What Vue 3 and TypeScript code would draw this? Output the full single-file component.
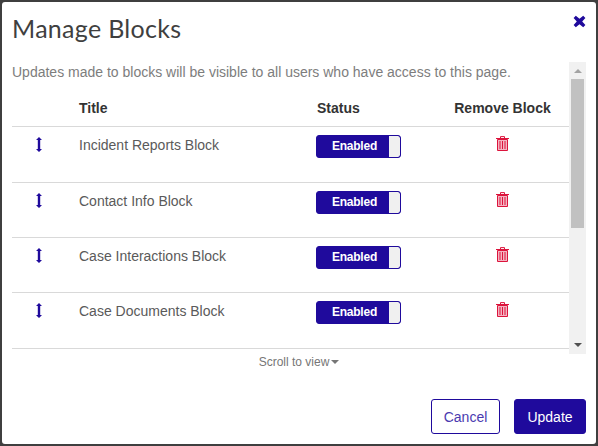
<script setup lang="ts">
const blocks: string[] = [
  'Incident Reports Block',
  'Contact Info Block',
  'Case Interactions Block',
  'Case Documents Block',
]
</script>

<template>
  <div class="frame">
    <div class="modal">
      <header class="head">
        <h1 class="title">Manage Blocks</h1>
        <button class="close" aria-label="Close">
          <svg width="13" height="13" viewBox="0 0 13 13">
            <path d="M2.8 .8 6.5 3.8 10.2 .8 12.4 3 9.2 6.5 12.4 10 10.2 12.2 6.5 9.2 2.8 12.2 .6 10 3.8 6.5 .6 3Z" fill="#1f0a9c" />
          </svg>
        </button>
      </header>
      <div class="scrollarea">
        <div class="content">
          <p class="intro">Updates made to blocks will be visible to all users who have access to this page.</p>
          <div class="row header">
            <div class="c-move"></div>
            <div class="c-title">Title</div>
            <div class="c-status">Status</div>
            <div class="c-remove">Remove Block</div>
          </div>
          <div v-for="b in blocks" :key="b" class="row item">
            <div class="c-move">
              <svg width="8" height="15" viewBox="0 0 8 15">
                <path d="M4 0 7 3H5.2V12H7L4 15 1 12H2.8V3H1Z" fill="#1f0a9c" />
              </svg>
            </div>
            <div class="c-title name">{{ b }}</div>
            <div class="c-status">
              <div class="toggle">
                <span class="on">Enabled</span>
                <span class="knob"></span>
              </div>
            </div>
            <div class="c-remove">
              <svg width="13" height="15" viewBox="0 0 13 15">
                <path d="M4.5 2V.6H8.5V2" fill="none" stroke="#dc143c" stroke-width="1" />
                <path d="M0 2H13V3H0Z" fill="#dc143c" />
                <path d="M1.5 3.5H11.5V14.5H1.5Z" fill="#f4b4c2" stroke="#dc143c" stroke-width="1" />
                <path d="M4 5V13M6.5 5V13M9 5V13" stroke="#dc143c" stroke-width="1" />
              </svg>
            </div>
          </div>
        </div>
        <div class="bar">
          <div class="arrow up"></div>
          <div class="thumb"></div>
          <div class="arrow down"></div>
        </div>
      </div>
      <div class="hint">Scroll to view<span class="caret"></span></div>
      <footer class="foot">
        <button class="btn cancel">Cancel</button>
        <button class="btn update">Update</button>
      </footer>
    </div>
  </div>
</template>

<style>
html, body { margin: 0; padding: 0; }
</style>

<style scoped>
.frame {
  width: 598px;
  height: 446px;
  box-sizing: border-box;
  padding: 2px;
  background: #3f3f3f;
  font-family: "Liberation Sans", Arial, sans-serif;
  display: flex;
}
.modal {
  flex: 1;
  background: #fff;
  border-radius: 3px;
  display: flex;
  flex-direction: column;
  padding: 0 10px;
  overflow: hidden;
}
.head {
  height: 60px;
  display: flex;
  justify-content: space-between;
  flex: none;
}
.title {
  margin: 11px 0 0;
  font: 400 25px/30px Lato, sans-serif;
  color: #3f3f3f;
  letter-spacing: 0.3px;
}
.close {
  border: 0;
  background: none;
  padding: 0;
  margin: 12.5px 0 0;
  width: 13px;
  height: 13px;
  display: block;
}
.close svg { display: block; }
.scrollarea {
  display: flex;
  height: 292px;
  flex: none;
  overflow: hidden;
}
.content {
  flex: 1;
  min-width: 0;
  overflow: hidden;
}
.intro {
  margin: 2px 0 0;
  font-size: 14px;
  line-height: 16px;
  color: #7d7d7d;
  height: 30px;
}
.row {
  display: flex;
  border-bottom: 1px solid #d9d9d9;
  box-sizing: border-box;
}
.header {
  height: 33px;
  align-items: flex-start;
  font-weight: 700;
  font-size: 14px;
  line-height: 16px;
  color: #333;
  padding-top: 6px;
}
.item {
  height: 55px;
  padding-top: 8px;
}
.header + .item { height: 56px; }
.item:last-child { height: 56px; }
.c-move { width: 67px; flex: none; padding-left: 23px; box-sizing: border-box; }
.c-move svg { display: block; margin-top: 2px; }
.c-title { width: 238px; flex: none; }
.name {
  font-size: 14px;
  line-height: 20px;
  color: #5a5a5a;
}
.c-status { width: 129px; flex: none; }
.c-remove { width: 113px; flex: none; text-align: center; white-space: nowrap; }
.item .c-remove svg { display: block; margin: 1px auto 0; }
.toggle {
  width: 85px;
  height: 23px;
  margin-left: -1px;
  box-sizing: border-box;
  display: flex;
  border: 1px solid #1f0a9c;
  border-radius: 3px;
  overflow: hidden;
  background: #1f0a9c;
}
.on {
  flex: 1;
  color: #fff;
  font-size: 12px;
  font-weight: 700;
  letter-spacing: -0.25px;
  line-height: 21px;
  text-align: center;
  padding-left: 3px;
}
.knob {
  width: 11px;
  background: #f0f0f0;
  border-radius: 0 2px 2px 0;
}
.bar {
  width: 17px;
  flex: none;
  background: #f1f1f1;
  display: flex;
  flex-direction: column;
  align-items: center;
}
.arrow {
  width: 0;
  height: 0;
  border-left: 4px solid transparent;
  border-right: 4px solid transparent;
}
.arrow.up { border-bottom: 4px solid #a3a3a3; margin: 7px 0 6px; }
.thumb { width: 13px; height: 149px; background: #c1c1c1; flex: none; }
.arrow.down { border-top: 4px solid #505050; margin-top: auto; margin-bottom: 7px; }
.hint {
  text-align: center;
  font-size: 12px;
  line-height: 14px;
  color: #767676;
  margin-top: 1px;
  height: 14px;
  flex: none;
}
.caret {
  display: inline-block;
  width: 0;
  height: 0;
  margin-left: 2px;
  vertical-align: 2px;
  border-left: 4px solid transparent;
  border-right: 4px solid transparent;
  border-top: 4px solid #767676;
}
.foot {
  margin-top: auto;
  margin-bottom: 10px;
  display: flex;
  justify-content: flex-end;
  gap: 14px;
}
.btn {
  height: 35px;
  box-sizing: border-box;
  border-radius: 3px;
  font-family: "Liberation Sans", Arial, sans-serif;
  font-size: 14px;
  border: 1px solid #1f0a9c;
  padding: 0;
}
.cancel { width: 69px; background: #fff; color: #4a3ab0; }
.update { width: 72px; background: #1f0a9c; color: #fff; }
</style>
